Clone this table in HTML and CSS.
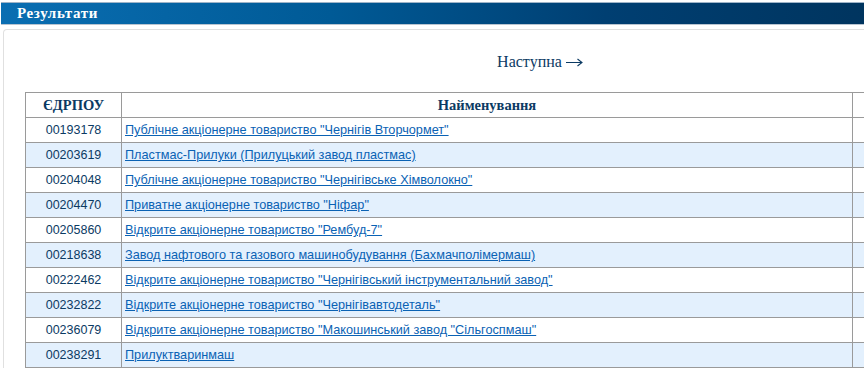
FILE: index.html
```html
<!DOCTYPE html>
<html lang="uk">
<head>
<meta charset="utf-8">
<title>Результати</title>
<link rel="stylesheet" href="styles.css">
</head>
<body>
<div class="page">
  <div class="titlebar"><span class="title">Результати</span></div>
  <div class="panel">
    <div class="pager"><a class="next" href="#">Наступна <svg class="arrow" width="17" height="9" viewBox="0 0 17 9"><path d="M0 4.5H16M11.5 1L16 4.5L11.5 8" fill="none" stroke="#0b3a63" stroke-width="1.1"/></svg></a></div>
    <table class="results">
      <colgroup><col class="c-code"><col class="c-name"><col class="c-extra"></colgroup>
      <thead>
        <tr><th>ЄДРПОУ</th><th>Найменування</th><th></th></tr>
      </thead>
      <tbody>
        <tr><td class="code">00193178</td><td class="name"><a href="#">Публічне акціонерне товариство "Чернігів Вторчормет"</a></td><td></td></tr>
        <tr class="alt"><td class="code">00203619</td><td class="name"><a href="#">Пластмас-Прилуки (Прилуцький завод пластмас)</a></td><td></td></tr>
        <tr><td class="code">00204048</td><td class="name"><a href="#">Публічне акціонерне товариство "Чернігівське Хімволокно"</a></td><td></td></tr>
        <tr class="alt"><td class="code">00204470</td><td class="name"><a href="#">Приватне акціонерне товариство "Ніфар"</a></td><td></td></tr>
        <tr><td class="code">00205860</td><td class="name"><a href="#">Відкрите акціонерне товариство "Рембуд-7"</a></td><td></td></tr>
        <tr class="alt"><td class="code">00218638</td><td class="name"><a href="#">Завод нафтового та газового машинобудування (Бахмачполімермаш)</a></td><td></td></tr>
        <tr><td class="code">00222462</td><td class="name"><a href="#">Відкрите акціонерне товариство "Чернігівський інструментальний завод"</a></td><td></td></tr>
        <tr class="alt"><td class="code">00232822</td><td class="name"><a href="#">Відкрите акціонерне товариство "Чернігівавтодеталь"</a></td><td></td></tr>
        <tr><td class="code">00236079</td><td class="name"><a href="#">Відкрите акціонерне товариство "Макошинський завод "Сільгоспмаш"</a></td><td></td></tr>
        <tr class="alt"><td class="code">00238291</td><td class="name"><a href="#">Прилуктваринмаш</a></td><td></td></tr>
      </tbody>
    </table>
  </div>
</div>
</body>
</html>
```
FILE: styles.css
```css
html, body {
  margin: 0;
  padding: 0;
  background: #ffffff;
  overflow: hidden;
}
.page {
  width: 1100px;
  padding-top: 2px;
}
.titlebar {
  margin-left: 1px;
  height: 21px;
  border-top: 1px solid #9fb4c8;
  border-bottom: 1px solid #b8c4d0;
  background: linear-gradient(to right, #0a6eb2 0%, #005a96 30%, #003f72 55%, #00345e 80%, #00325a 100%);
  display: flex;
  align-items: center;
  padding-left: 16px;
}
.title {
  font-family: "Liberation Serif", serif;
  font-weight: bold;
  font-size: 15px;
  color: #ffffff;
  letter-spacing: 0.6px;
}
.panel {
  margin-top: 4px;
  margin-left: 3px;
  width: 1030px;
  border: 1px solid #e0e0e0;
  border-bottom: none;
  border-radius: 4px 4px 0 0;
  padding: 0 21px;
  height: 400px;
}
.pager {
  height: 62px;
  display: flex;
  align-items: center;
  justify-content: center;
  padding-top: 2px;
  box-sizing: border-box;
}
.next {
  font-family: "Liberation Serif", serif;
  font-size: 16px;
  color: #0b3a63;
  text-decoration: none;
  display: inline-flex;
  align-items: center;
  gap: 4px;
}
.arrow {
  display: block;
  margin-top: 1px;
}
.results {
  border-collapse: collapse;
  width: 1030px;
  table-layout: fixed;
}
.c-code { width: 96px; }
.c-name { width: 731px; }
.results th, .results td {
  border: 1px solid #9a9a9a;
  height: 25px;
  padding: 0 3px;
  box-sizing: border-box;
}
.results th {
  font-family: "Liberation Serif", serif;
  font-weight: bold;
  font-size: 14.5px;
  color: #0b3a63;
  text-align: center;
  background: #ffffff;
}
.results td {
  font-family: "Liberation Sans", Arial, sans-serif;
  font-size: 12.7px;
  background: #ffffff;
}
.results tr.alt td {
  background: #e3f0fd;
}
.results td.code {
  text-align: center;
  color: #0b3a63;
  font-size: 12.5px;
}
.results td.name a {
  color: #0a62b4;
  text-decoration: underline;
}
```
